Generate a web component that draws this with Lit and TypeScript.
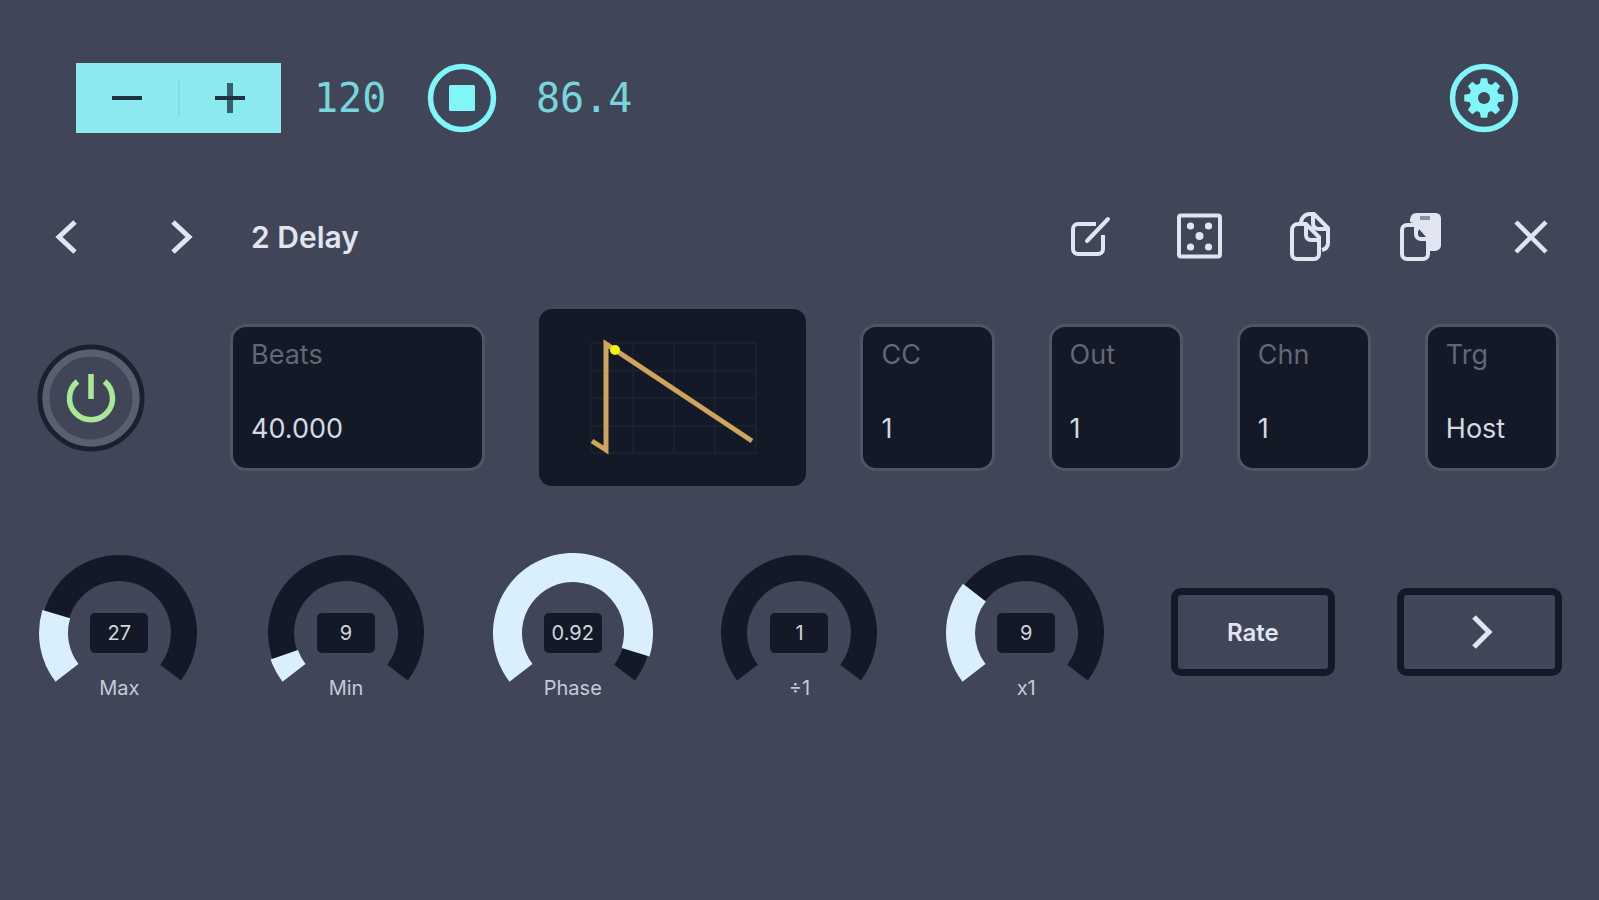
import { LitElement, html, css, svg } from "lit";
import { customElement, property, state } from "lit/decorators.js";

const SWEEP = 255;
const START = 180 + (360 - SWEEP) / 2;

/** Point on a circle of radius r round the origin; degrees run clockwise from the top. */
function point(r: number, deg: number): string {
  const a = (deg * Math.PI) / 180;
  return `${(r * Math.sin(a)).toFixed(2)} ${(-r * Math.cos(a)).toFixed(2)}`;
}

/** Closed ring segment between two fractions of the knob's travel. */
function ring(outer: number, inner: number, from: number, to: number): string {
  const a = START + SWEEP * from;
  const b = START + SWEEP * to;
  const large = b - a > 180 ? 1 : 0;
  return `M${point(outer, a)}A${outer} ${outer} 0 ${large} 1 ${point(outer, b)}L${point(inner, b)}A${inner} ${inner} 0 ${large} 0 ${point(inner, a)}Z`;
}

/** Outline of an eight-toothed gear. */
function gear(): string {
  const parts: string[] = [];
  for (let i = 0; i < 8; i++) {
    const c = i * 45;
    parts.push(point(15, c - 16), point(20, c - 9), point(20, c + 9), point(15, c + 16));
  }
  return "M" + parts.join("L") + "Z";
}

@customElement("param-knob")
export class ParamKnob extends LitElement {
  @property() label = "";
  @property({ type: Number }) min = 0;
  @property({ type: Number }) max = 127;
  @property({ type: Number }) step = 1;
  @property({ type: Number }) value = 0;

  static styles = css`
    :host {
      display: flex;
      justify-content: center;
    }
    .knob {
      position: relative;
      display: grid;
      grid-template-columns: 164px;
      grid-template-rows: 125px 24px;
      justify-items: center;
    }
    .dial {
      display: block;
      grid-area: 1 / 1;
      width: 164px;
      height: 132px;
    }
    .track {
      fill: #131926;
    }
    .value {
      fill: #d9f0fc;
    }
    .readout {
      grid-area: 1 / 1;
      align-self: end;
      margin-bottom: 23px;
      width: 58px;
      height: 40px;
      border-radius: 5px;
      background: #131926;
      color: #d2d6df;
      font-size: 20px;
      line-height: 40px;
      text-align: center;
    }
    .name {
      font-size: 20px;
      line-height: 24px;
      color: #c6cad6;
    }
    .range {
      position: absolute;
      inset: 0;
      width: 100%;
      height: 100%;
      margin: 0;
      opacity: 0;
      cursor: pointer;
    }
  `;

  private onInput(e: Event) {
    this.value = Number((e.target as HTMLInputElement).value);
  }

  render() {
    const f = (this.value - this.min) / (this.max - this.min);
    return html`
      <div class="knob">
        <svg class="dial" viewBox="-82 -82 164 132" aria-hidden="true">
          <path class="track" d=${ring(78, 52, 0, 1)}></path>
          ${f > 0 ? svg`<path class="value" d=${ring(80, 51, 0, f)}></path>` : null}
        </svg>
        <output class="readout" for="range">${this.value}</output>
        <label class="name" for="range">${this.label}</label>
        <input class="range" id="range" type="range" min=${this.min} max=${this.max}
          step=${this.step} .value=${String(this.value)} @input=${this.onInput} />
      </div>
    `;
  }
}

@customElement("app-root")
export class AppRoot extends LitElement {
  @state() private tempo = 120;

  static styles = css`
    :host {
      display: block;
      box-sizing: border-box;
      min-height: 100vh;
      padding: 63px 37px;
      background: #404558;
      color: #e1e5ef;
      font-family: Inter, "Liberation Sans", sans-serif;
    }
    button {
      display: grid;
      place-items: center;
      margin: 0;
      padding: 0;
      border: 0;
      background: none;
      color: inherit;
      font: inherit;
      cursor: pointer;
    }
    svg {
      display: block;
    }
    .transport {
      display: flex;
      align-items: center;
      gap: 31px;
      padding: 0 43px 0 39px;
      height: 70px;
    }
    .stepper {
      display: flex;
      align-items: center;
      width: 205px;
      height: 70px;
      background: #8ce9ef;
      color: #1d3340;
    }
    .stepper button {
      flex: 1;
      height: 70px;
    }
    .divider {
      width: 2px;
      height: 38px;
      background: #83dde4;
    }
    .number {
      box-sizing: border-box;
      min-width: 84px;
      padding-left: 2px;
      color: #76d6dc;
      font-family: "DejaVu Sans Mono", "Liberation Mono", monospace;
      font-size: 40px;
      line-height: 48px;
    }
    .playback {
      display: flex;
      align-items: center;
      gap: 37px;
    }
    .round {
      color: #80f6f8;
    }
    .settings {
      margin-left: auto;
    }
    .header {
      display: flex;
      align-items: center;
      justify-content: space-between;
      height: 60px;
      margin-top: 74px;
      padding: 0 5px 0 3px;
    }
    .navigate {
      display: flex;
      align-items: center;
      gap: 64px;
    }
    .navigate button,
    .tools button {
      width: 52px;
      height: 60px;
    }
    .title {
      margin: 0;
      margin-left: -21px;
      font-size: 30px;
      font-weight: 600;
      line-height: 36px;
    }
    .tools {
      display: flex;
      gap: 58px;
    }
    .fields {
      display: grid;
      grid-template-columns: 139px 255fr 267fr repeat(4, 134fr);
      align-items: center;
      column-gap: 54px;
      margin-top: 42px;
      padding-right: 3px;
    }
    .power {
      width: 108px;
      height: 108px;
    }
    .field {
      display: flex;
      flex-direction: column;
      justify-content: space-between;
      box-sizing: border-box;
      min-width: 0;
      height: 147px;
      padding: 12px 10px 23px 18px;
      border: 3px solid #505564;
      border-radius: 16px;
      background: #131926;
    }
    .field label {
      color: #636773;
      font-size: 27px;
      line-height: 32px;
    }
    .field input,
    .field select {
      appearance: none;
      width: 100%;
      height: 32px;
      margin: 0;
      padding: 0;
      border: 0;
      background: none;
      color: #d6d9e1;
      font: inherit;
      font-size: 27px;
      line-height: 32px;
    }
    .scope {
      display: grid;
      place-items: center;
      height: 177px;
      border-radius: 13px;
      background: #131926;
    }
    .knobs {
      display: grid;
      grid-template-columns: repeat(7, 1fr);
      column-gap: 62px;
      margin-top: 65px;
    }
    .wide {
      height: 88px;
      margin-top: 37px;
      border: 7px solid #131926;
      border-radius: 10px;
      font-size: 24px;
      font-weight: 600;
    }
  `;

  private field(id: string, label: string, value: string) {
    return html`
      <div class="field">
        <label for=${id}>${label}</label>
        <input id=${id} type="text" inputmode="decimal" .value=${value} />
      </div>
    `;
  }

  render() {
    return html`
      <header class="transport">
        <div class="stepper">
          <button aria-label="Decrease tempo" @click=${() => this.tempo--}>
            <svg width="32" height="32" viewBox="0 0 32 32"><path d="M1 16h30" stroke="currentColor" stroke-width="4"/></svg>
          </button>
          <span class="divider"></span>
          <button aria-label="Increase tempo" @click=${() => this.tempo++}>
            <svg width="32" height="32" viewBox="0 0 32 32"><path d="M16 1v30" stroke="#36616b" stroke-width="6"/><path d="M1 16h30" stroke="currentColor" stroke-width="4"/></svg>
          </button>
        </div>
        <span class="number">${this.tempo}</span>
        <div class="playback">
          <button class="round" aria-label="Stop">
            <svg width="70" height="70" viewBox="0 0 70 70"><circle cx="35" cy="35" r="31.5" fill="none" stroke="currentColor" stroke-width="5.5"/><rect x="22" y="22" width="26" height="26" rx="1.5" fill="currentColor"/></svg>
          </button>
          <span class="number">86.4</span>
        </div>
        <button class="round settings" aria-label="Settings">
          <svg width="70" height="70" viewBox="-35 -35 70 70"><circle r="31.5" fill="none" stroke="currentColor" stroke-width="5.5"/><path d=${gear()} fill="currentColor"/><circle r="6" fill="#404558"/></svg>
        </button>
      </header>

      <div class="header">
        <div class="navigate">
          <button aria-label="Previous">
            <svg width="26" height="36" viewBox="0 0 26 36"><path d="M22 3L6 18l16 15" fill="none" stroke="currentColor" stroke-width="5"/></svg>
          </button>
          <button aria-label="Next">
            <svg width="26" height="36" viewBox="0 0 26 36"><path d="M4 3l16 15L4 33" fill="none" stroke="currentColor" stroke-width="5"/></svg>
          </button>
          <h1 class="title">2 Delay</h1>
        </div>
        <div class="tools">
          <button aria-label="Edit">
            <svg width="52" height="52" viewBox="0 0 52 52" fill="none" stroke="currentColor" stroke-width="4"><path d="M31 13H13a5 5 0 0 0-5 5v20a5 5 0 0 0 5 5h20a5 5 0 0 0 5-5V24"/><path d="M22 30L43 8" stroke-linecap="round"/></svg>
          </button>
          <button aria-label="Randomise">
            <svg width="52" height="52" viewBox="0 0 52 52"><rect x="4" y="4.500" width="41" height="41" rx="2" fill="none" stroke="currentColor" stroke-width="4"/><g fill="currentColor"><circle cx="15.500" cy="15" r="3.600"/><circle cx="33.500" cy="15" r="3.600"/><circle cx="24.500" cy="25" r="4"/><circle cx="15.500" cy="36" r="3.600"/><circle cx="33.500" cy="36" r="3.600"/></g></svg>
          </button>
          <button aria-label="Copy">
            <svg width="52" height="52" viewBox="0 0 52 52" fill="none" stroke="currentColor" stroke-width="4"><path d="M16 12c0-5 4-9 9-9h4l14 14v15c0 4-2 6-6 7"/><path d="M28 4v8c0 4 2 6 6 6h9"/><path d="M13 13h8l13 13v17a5 5 0 0 1-5 5H12a5 5 0 0 1-5-5V19a6 6 0 0 1 6-6z"/><path d="M21 14v10c0 3 2 5 5 5h8"/></svg>
          </button>
          <button aria-label="Paste">
            <svg width="52" height="52" viewBox="0 0 52 52" fill="none" stroke="currentColor" stroke-width="4"><path d="M15 11c0-6 2-9 7-9h18c4 0 6 2 6 6v26c0 4-3 6-8 6h-5V27L21 13z" fill="currentColor" stroke="none"/><path d="M25 7h10" stroke="#8b90a0" stroke-width="4"/><path d="M12 14h9l12 13v16a5 5 0 0 1-5 5H12a5 5 0 0 1-5-5V19a5 5 0 0 1 5-5z"/><path d="M21 14v9c0 3 2 5 5 5h7"/><path d="M24 18l7 8h-5c-1 0-2-1-2-2z" fill="#404558" stroke="none"/></svg>
          </button>
          <button aria-label="Close">
            <svg width="36" height="36" viewBox="0 0 36 36"><path d="M3 3l30 30M33 3L3 33" stroke="currentColor" stroke-width="4.500"/></svg>
          </button>
        </div>
      </div>

      <div class="fields">
        <button class="power" aria-label="Power">
          <svg width="108" height="108" viewBox="-54 -54 108 108" fill="none"><circle r="51" stroke="#1a202e" stroke-width="5"/><circle r="45" stroke="#5a5f6e" stroke-width="7"/><path d="M-13.500 -16.500A21.500 21.500 0 1 0 13.500 -16.500M0-24V1" stroke="#a8e896" stroke-width="5.500"/></svg>
        </button>
        ${this.field("beats", "Beats", "40.000")}
        <div class="scope">
          <svg width="170" height="118" viewBox="0 0 170 118" fill="none" role="img" aria-label="Falling saw waveform">
            <path d="M3 4h166M3 32h166M3 59h166M3 87h166M3 114h166M3 4v110M45 4v110M86 4v110M127 4v110M168 4v110" stroke="#1b202d" stroke-width="2"/>
            <path d="M4 102l14 9V5l146 97" stroke="#cea45f" stroke-width="5"/>
            <circle cx="27" cy="11" r="5" fill="#f2f400"/>
          </svg>
        </div>
        ${this.field("cc", "CC", "1")}
        ${this.field("out", "Out", "1")}
        ${this.field("chn", "Chn", "1")}
        <div class="field">
          <label for="trg">Trg</label>
          <select id="trg"><option>Host</option></select>
        </div>
      </div>

      <div class="knobs">
        <param-knob label="Max" .value=${27}></param-knob>
        <param-knob label="Min" .value=${9}></param-knob>
        <param-knob label="Phase" .max=${1} .step=${0.01} .value=${0.92}></param-knob>
        <param-knob label="÷1" .min=${1} .max=${28} .value=${1}></param-knob>
        <param-knob label="x1" .min=${1} .max=${28} .value=${9}></param-knob>
        <button class="wide">Rate</button>
        <button class="wide" aria-label="Next page">
          <svg width="26" height="36" viewBox="0 0 26 36"><path d="M7 3l15 15L7 33" fill="none" stroke="currentColor" stroke-width="5"/></svg>
        </button>
      </div>
    `;
  }
}
